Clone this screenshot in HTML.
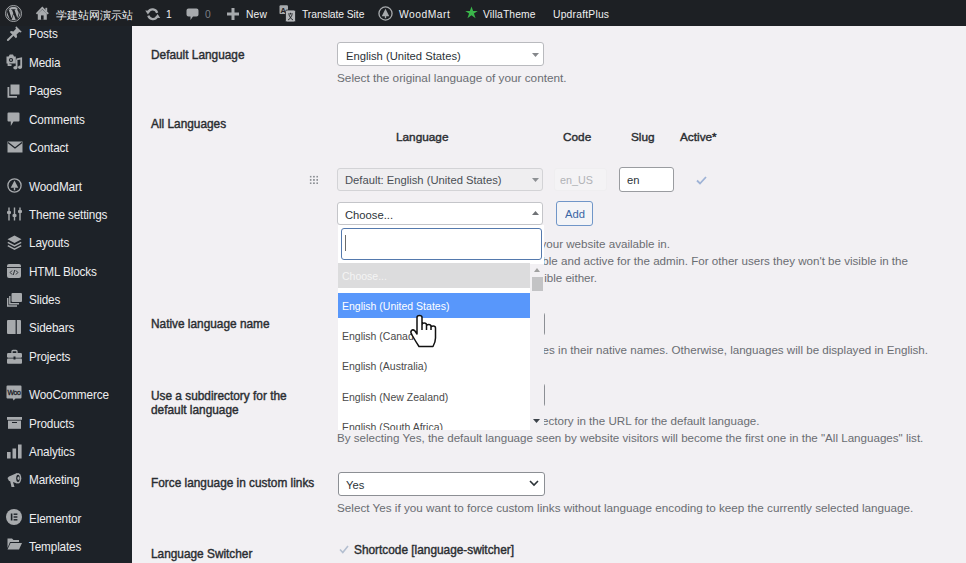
<!DOCTYPE html>
<html><head><meta charset="utf-8">
<style>
*{box-sizing:border-box;margin:0;padding:0}
html,body{width:966px;height:563px;overflow:hidden;background:#f2f0f3;font-family:"Liberation Sans",sans-serif;position:relative}
.a{position:absolute;white-space:nowrap}
svg{position:absolute;overflow:visible}
#bar{position:absolute;left:0;top:0;width:966px;height:26px;background:#1d2024}
#side{position:absolute;left:0;top:26px;width:132px;height:537px;background:#1d2228}
.bt{position:absolute;top:7.8px;font-size:10.3px;line-height:14px;color:#f0f0f1;white-space:nowrap}
.si{position:absolute;left:29px;font-size:12.7px;letter-spacing:-0.15px;line-height:14px;color:#eeeef0;white-space:nowrap;transform:translateY(0.5px) scaleX(0.925);transform-origin:0 0}
.lbl{position:absolute;left:151px;font-size:11.85px;-webkit-text-stroke:0.4px #2a2d31;line-height:14px;color:#2a2d31;white-space:nowrap}
.desc{position:absolute;left:337px;font-size:11.6px;line-height:14px;color:#6a6d72;white-space:nowrap}
.sel{position:absolute;background:#fff;border:1px solid #8c8f94;border-radius:3px}
.st{position:absolute;font-size:11.7px;line-height:14px;color:#2c3338;white-space:nowrap;transform:scaleX(0.96);transform-origin:0 0}
.th{position:absolute;top:130px;font-size:11.8px;-webkit-text-stroke:0.4px #2a2d31;line-height:14px;color:#2a2d31;white-space:nowrap}
.op{position:absolute;left:342px;font-size:10.5px;line-height:14px;color:#4a4a4a;white-space:nowrap}
</style></head><body>
<div id="bar"></div>
<div id="side"></div>

<!-- top bar -->
<svg style="left:4.7px;top:4.9px" width="17" height="17" viewBox="0 0 24 24"><defs><clipPath id="wpc"><circle cx="12" cy="12" r="9.6"/></clipPath></defs><circle cx="12" cy="12" r="11.3" fill="none" stroke="#a7aaad" stroke-width="1.4"/><circle cx="12" cy="12" r="9.6" fill="#a7aaad"/><path clip-path="url(#wpc)" fill="#1d2024" d="M21.469 6.825c.84 1.537 1.318 3.3 1.318 5.175 0 3.979-2.156 7.456-5.363 9.325l3.295-9.527c.615-1.54.82-2.771.82-3.864 0-.405-.026-.78-.07-1.11m-7.981.105c.647-.03 1.232-.105 1.232-.105.582-.075.514-.93-.067-.899 0 0-1.755.135-2.88.135-1.064 0-2.85-.15-2.85-.15-.585-.03-.661.855-.075.885 0 0 .54.061 1.125.09l1.68 4.605-2.37 7.08L5.354 6.9c.649-.03 1.234-.1 1.234-.1.585-.075.516-.93-.065-.896 0 0-1.746.138-2.874.138-.2 0-.438-.008-.69-.015C4.911 3.15 8.235 1.215 12 1.215c2.809 0 5.365 1.072 7.286 2.833-.046-.003-.091-.009-.141-.009-1.06 0-1.812.923-1.812 1.914 0 .89.513 1.643 1.06 2.531.411.72.89 1.643.89 2.977 0 .915-.354 1.994-.821 3.479l-1.075 3.585-3.9-11.61.001.014zM12 22.784c-1.059 0-2.081-.153-3.048-.437l3.237-9.406 3.315 9.087c.024.053.05.101.078.149-1.12.393-2.325.609-3.582.609M1.211 12c0-1.564.336-3.05.935-4.39L7.29 21.709C3.694 19.96 1.212 16.271 1.211 12M12 0C5.385 0 0 5.385 0 12s5.385 12 12 12 12-5.385 12-12S18.615 0 12 0"/></svg>
<svg style="left:36px;top:7px" width="13" height="13" viewBox="0 0 13 13"><path d="M0.5 6.8 L6.3 0.8 L12.2 6.8" fill="none" stroke="#a7aaad" stroke-width="1.8" stroke-linejoin="miter"/><rect x="9.4" y="0.8" width="1.8" height="3.6" fill="#a7aaad"/><path d="M1.8 6.5 L6.3 2.4 L10.8 6.5 V12.8 H1.8 Z" fill="#a7aaad"/><rect x="5" y="8.4" width="2.6" height="4.4" fill="#1d2024"/></svg>
<div class="bt" style="left:56px;font-size:11px">学建站网演示站</div>
<svg style="left:144.5px;top:7.5px" width="15.5" height="12.5" viewBox="0 0 16 13"><path d="M12.6 5 A5 5 0 0 0 3.4 4.2 M3.4 8 A5 5 0 0 0 12.6 8.8" fill="none" stroke="#a7aaad" stroke-width="2.4"/><path d="M0.2 2.6 L5.6 2.8 L3 6.8 Z M15.8 10.4 L10.4 10.2 L13 6.2 Z" fill="#a7aaad"/></svg>
<div class="bt" style="left:166px">1</div>
<svg style="left:185.5px;top:8px" width="13" height="12.5" viewBox="0 0 13 12.5"><path d="M2.5 0.5 H10.5 Q12.5 0.5 12.5 2.5 V6.5 Q12.5 8.5 10.5 8.5 H7 L4.5 12 V8.5 H2.5 Q0.5 8.5 0.5 6.5 V2.5 Q0.5 0.5 2.5 0.5 Z" fill="#a7aaad"/></svg>
<div class="bt" style="left:205px;color:#7c7f84">0</div>
<svg style="left:227px;top:8px" width="12" height="12" viewBox="0 0 12 12"><path d="M4.5 0H7.5V4.5H12V7.5H7.5V12H4.5V7.5H0V4.5H4.5Z" fill="#a7aaad"/></svg>
<div class="bt" style="left:246px;letter-spacing:0.15px">New</div>
<svg style="left:279px;top:5px" width="17" height="17" viewBox="0 0 17 17"><rect x="0.5" y="0.3" width="8.5" height="8.8" rx="1.2" fill="#a7aaad"/><text x="1.6" y="7.6" font-size="7.5" font-family="Liberation Sans" font-weight="bold" fill="#1d2024">A</text><rect x="6.5" y="5" width="10" height="12" rx="1.5" fill="#b4b6b9" stroke="#1d2024" stroke-width="0.8"/><path d="M9 9 H14 M11.5 7.8 V9 M10 10 Q11.5 14 14 15 M13 10 Q11.5 14 9 15" fill="none" stroke="#1d2024" stroke-width="0.9"/></svg>
<div class="bt" style="left:302px;letter-spacing:-0.06px">Translate Site</div>
<svg style="left:378px;top:6px" width="15" height="15" viewBox="0 0 16 16"><circle cx="8" cy="8" r="7" fill="none" stroke="#a7aaad" stroke-width="1.4"/><path d="M8 3 L12 11 H4 Z" fill="#a7aaad"/><rect x="7.3" y="10" width="1.4" height="3" fill="#a7aaad"/></svg>
<div class="bt" style="left:399px;letter-spacing:0.5px">WoodMart</div>
<svg style="left:465px;top:6px" width="13" height="13" viewBox="0 0 24 24"><path d="M12 1 L15 9 L23.5 9 L16.5 14 L19.5 22.5 L12 17 L4.5 22.5 L7.5 14 L0.5 9 L9 9 Z" fill="#3ab54a"/></svg>
<div class="bt" style="left:483px;letter-spacing:0.13px">VillaTheme</div>
<div class="bt" style="left:553px;letter-spacing:0.22px">UpdraftPlus</div>

<!-- sidebar texts -->
<div class="si" style="top:26.2px">Posts</div>
<div class="si" style="top:54.7px">Media</div>
<div class="si" style="top:83.2px">Pages</div>
<div class="si" style="top:112px">Comments</div>
<div class="si" style="top:140.3px">Contact</div>
<div class="si" style="top:178.7px">WoodMart</div>
<div class="si" style="top:207px">Theme settings</div>
<div class="si" style="top:235.3px">Layouts</div>
<div class="si" style="top:263.6px">HTML Blocks</div>
<div class="si" style="top:292px">Slides</div>
<div class="si" style="top:320.2px">Sidebars</div>
<div class="si" style="top:348.8px">Projects</div>
<div class="si" style="top:387.3px">WooCommerce</div>
<div class="si" style="top:415.6px">Products</div>
<div class="si" style="top:444px">Analytics</div>
<div class="si" style="top:472.2px">Marketing</div>
<div class="si" style="top:510.6px">Elementor</div>
<div class="si" style="top:538.8px">Templates</div>


<svg style="left:6.5px;top:25.5px" width="15" height="15" viewBox="0 0 15 15"><path d="M9.2 0.3 L14.7 5.8 L13.6 6.6 L12.2 6 L9.6 8.6 L10.1 11 L8.9 12.2 L2.8 6.1 L4 4.9 L6.4 5.4 L9 2.8 L8.4 1.4 Z" fill="#a7aaad"/><path d="M5.6 9.4 L0.9 14" stroke="#a7aaad" stroke-width="2" stroke-linecap="round"/></svg>
<svg style="left:6px;top:54px" width="16" height="16" viewBox="0 0 16 16"><path d="M0.5 2.6 H2.6 L3.8 0.6 H7 L8 2.6 H9.8 V9.4 H0.5 Z" fill="#a7aaad"/><circle cx="5" cy="6" r="2.1" fill="#1d2228"/><circle cx="5" cy="6" r="0.9" fill="#a7aaad"/><path d="M2.5 9 V11.2 H5.5" fill="none" stroke="#a7aaad" stroke-width="1.8"/><path d="M10.6 5.4 L15.2 4.4 V13.2 M10.6 5.4 V13.6" fill="none" stroke="#a7aaad" stroke-width="1.8"/><ellipse cx="9.4" cy="13.8" rx="2.1" ry="1.8" fill="#a7aaad"/><ellipse cx="14" cy="13.3" rx="2" ry="1.7" fill="#a7aaad"/></svg>
<svg style="left:7px;top:84px" width="13" height="14" viewBox="0 0 13 14"><path d="M3.5 0.5 H12.5 V10.5 H3.5 Z" fill="#a7aaad"/><path d="M0.5 3 H2.3 V12 H10 V13.8 H0.5 Z" fill="#a7aaad"/></svg>
<svg style="left:7px;top:111.5px" width="13" height="15" viewBox="0 0 13 15"><path d="M0.5 1.5 Q0.5 0.5 1.5 0.5 H11.5 Q12.5 0.5 12.5 1.5 V8.5 Q12.5 9.5 11.5 9.5 H6.5 L3.8 14 V9.5 H1.5 Q0.5 9.5 0.5 8.5 Z" fill="#a7aaad"/></svg>
<svg style="left:6.5px;top:141px" width="16" height="12" viewBox="0 0 16 12"><path d="M0.5 0.5 H15.5 V11.5 H0.5 Z" fill="#a7aaad"/><path d="M1 1.5 L8 7 L15 1.5" fill="none" stroke="#1d2228" stroke-width="1.3"/></svg>
<svg style="left:6.5px;top:177.5px" width="15" height="15" viewBox="0 0 15 15"><circle cx="7.5" cy="7.5" r="6.6" fill="none" stroke="#a7aaad" stroke-width="1.3"/><path d="M7.5 2.6 L11.3 9.8 H3.7 Z" fill="#a7aaad"/><rect x="6.8" y="9.5" width="1.4" height="2.8" fill="#a7aaad"/></svg>
<svg style="left:6.5px;top:206.5px" width="15" height="14" viewBox="0 0 15 14"><path d="M2 0.5 V13.5 M7.5 0.5 V13.5 M13 0.5 V13.5" stroke="#a7aaad" stroke-width="1.4"/><rect x="0" y="4" width="4" height="3" rx="1" fill="#a7aaad"/><rect x="5.5" y="7" width="4" height="3" rx="1" fill="#a7aaad"/><rect x="11" y="3" width="4" height="3" rx="1" fill="#a7aaad"/></svg>
<svg style="left:6.5px;top:234.5px" width="15" height="15" viewBox="0 0 15 15"><path d="M7.5 0.5 L14.5 4.2 L7.5 8 L0.5 4.2 Z" fill="#a7aaad"/><path d="M0.8 7.4 L7.5 11 L14.2 7.4 M0.8 10.6 L7.5 14.2 L14.2 10.6" fill="none" stroke="#a7aaad" stroke-width="1.5"/></svg>
<svg style="left:7px;top:263.5px" width="14" height="14" viewBox="0 0 14 14"><rect x="0" y="0" width="14" height="14" rx="2" fill="#a7aaad"/><rect x="0" y="3" width="14" height="0.9" fill="#1d2228"/><path d="M5 6.5 L3.2 8.5 L5 10.5 M9 6.5 L10.8 8.5 L9 10.5 M7.8 6 L6.2 11" fill="none" stroke="#1d2228" stroke-width="0.9"/></svg>
<svg style="left:6.5px;top:293px" width="15" height="14" viewBox="0 0 15 14"><rect x="4.5" y="0" width="10.5" height="9" rx="1" fill="#a7aaad"/><path d="M2.8 3 V10.8 H12" fill="none" stroke="#a7aaad" stroke-width="1.4"/><path d="M0.7 5 V13 H10" fill="none" stroke="#a7aaad" stroke-width="1.4"/></svg>
<svg style="left:7px;top:320px" width="14" height="14" viewBox="0 0 14 14"><rect x="0" y="0" width="14" height="14" rx="1" fill="#a7aaad"/><rect x="8.6" y="0" width="1.2" height="14" fill="#1d2228"/></svg>
<svg style="left:6.5px;top:349.5px" width="15" height="14" viewBox="0 0 15 14"><path d="M5 3 V1.5 Q5 0.5 6 0.5 H9 Q10 0.5 10 1.5 V3" fill="none" stroke="#a7aaad" stroke-width="1.3"/><rect x="0" y="3" width="15" height="4.8" rx="1.2" fill="#a7aaad"/><rect x="0" y="8.6" width="15" height="5.2" rx="1" fill="#a7aaad"/><rect x="6.5" y="6.5" width="2" height="3" fill="#1d2228"/></svg>
<svg style="left:6px;top:385px" width="16" height="16" viewBox="0 0 16 16"><path d="M1.5 0.5 H14.5 Q15.5 0.5 15.5 1.5 V12.5 Q15.5 13.5 14.5 13.5 H9.5 L7.5 15.5 L6.8 13.5 H1.5 Q0.5 13.5 0.5 12.5 V1.5 Q0.5 0.5 1.5 0.5Z" fill="#a7aaad"/><text x="1.6" y="9.6" font-size="7" font-family="Liberation Sans" fill="#1d2228" letter-spacing="-0.5" stroke="#1d2228" stroke-width="0.3">Woo</text></svg>
<svg style="left:6.5px;top:417px" width="15" height="12" viewBox="0 0 15 12"><rect x="0" y="0" width="15" height="2.8" fill="#a7aaad"/><rect x="1" y="3.6" width="13" height="8.2" fill="#a7aaad"/><rect x="5" y="5" width="5" height="1" fill="#1d2228"/></svg>
<svg style="left:6.5px;top:443.5px" width="15" height="15" viewBox="0 0 15 15"><rect x="0" y="8" width="3.6" height="6.5" fill="#a7aaad"/><rect x="5.5" y="4.5" width="3.6" height="10" fill="#a7aaad"/><rect x="11" y="0.5" width="3.6" height="14" fill="#a7aaad"/></svg>
<svg style="left:6.5px;top:471.5px" width="15" height="16" viewBox="0 0 15 16"><path d="M0.5 6 L2 4.5 L10 1 V11.5 L6 10 L7.5 15 H4.5 L3.2 9.3 L2 9 Z" fill="#a7aaad"/><ellipse cx="11" cy="6.3" rx="3.3" ry="5.3" fill="#a7aaad"/><ellipse cx="11" cy="6.3" rx="1.8" ry="3.6" fill="#1d2228"/><ellipse cx="11.4" cy="6.3" rx="1" ry="1.8" fill="#a7aaad"/></svg>
<svg style="left:6px;top:509px" width="16" height="16" viewBox="0 0 16 16"><circle cx="8" cy="8" r="8" fill="#a7aaad"/><rect x="4.8" y="4.5" width="1.6" height="7" fill="#1d2228"/><rect x="7.6" y="4.5" width="3.8" height="1.4" fill="#1d2228"/><rect x="7.6" y="7.3" width="3.8" height="1.4" fill="#1d2228"/><rect x="7.6" y="10.1" width="3.8" height="1.4" fill="#1d2228"/></svg>
<svg style="left:6.5px;top:538px" width="15" height="12" viewBox="0 0 15 12"><path d="M0.5 0.5 H5 L6.5 2 H12 V4 H3 L0.5 10 Z" fill="#a7aaad"/><path d="M3.5 5 H15 L12 11.5 H0.5 Z" fill="#a7aaad"/></svg>


<!-- content labels -->
<div class="lbl" style="top:47.6px">Default Language</div>
<div class="lbl" style="top:116.5px">All Languages</div>
<div class="lbl" style="top:316.9px">Native language name</div>
<div class="lbl" style="top:389.2px;line-height:14.2px">Use a subdirectory for the<br>default language</div>
<div class="lbl" style="top:476px">Force language in custom links</div>
<div class="lbl" style="top:546.6px">Language Switcher</div>

<!-- default language -->
<div class="sel" style="left:337px;top:42px;width:207px;height:24px;border-color:#b9babe"></div>
<div class="st" style="left:345.5px;top:48.8px">English (United States)</div>
<svg style="left:531.5px;top:52.5px" width="7" height="4" viewBox="0 0 7 4"><path d="M0 0H7L3.5 4Z" fill="#85878b"/></svg>
<div class="desc" style="top:71.3px;font-size:11.78px">Select the original language of your content.</div>

<!-- table header -->
<div class="th" style="left:396px">Language</div>
<div class="th" style="left:563px">Code</div>
<div class="th" style="left:631px">Slug</div>
<div class="th" style="left:680px">Active*</div>

<!-- row -->
<div class="a" style="left:309px;top:175px;width:10px;height:10px;background-image:radial-gradient(circle,#8c8f94 0.9px,transparent 1.3px);background-size:3.3px 3.3px"></div>
<div class="sel" style="left:337px;top:168px;width:206px;height:23px;background:#efeef0;border-color:#d3d3d6"></div>
<div class="st" style="left:345px;top:173px;color:#4a4f55">Default: English (United States)</div>
<svg style="left:532px;top:178px" width="7" height="4" viewBox="0 0 7 4"><path d="M0 0H7L3.5 4Z" fill="#8d9094"/></svg>
<div class="sel" style="left:554px;top:168px;width:53px;height:23px;background:#f4f3f5;border-color:#efeef0"></div>
<div class="st" style="left:560px;top:173px;color:#b0b2b6;font-size:11.2px">en_US</div>
<div class="sel" style="left:619px;top:167px;width:55px;height:25px;border-color:#9a9ca0"></div>
<div class="st" style="left:627px;top:173px">en</div>
<svg style="left:696px;top:176px" width="11" height="9" viewBox="0 0 11 9"><path d="M1 4.5 L4 7.5 L10 1" fill="none" stroke="#9fb3d6" stroke-width="1.8"/></svg>

<!-- choose row -->
<div class="sel" style="left:337px;top:202px;width:206px;height:23px;border-color:#c4c5c9"></div>
<div class="st" style="left:345px;top:207.5px">Choose...</div>
<svg style="left:532px;top:211px" width="7" height="4" viewBox="0 0 7 4"><path d="M0 4H7L3.5 0Z" fill="#6f7276"/></svg>
<div class="sel" style="left:556px;top:201px;width:37px;height:25px;background:#f3f4f7;border-color:#7096c8"></div>
<div class="st" style="left:565px;top:207px;color:#3b67a5">Add</div>

<!-- desc -->




<!-- native -->
<div class="sel" style="left:338px;top:312px;width:207px;height:24px"></div>


<!-- subdir -->
<div class="sel" style="left:338px;top:383px;width:207px;height:24px"></div>

<div class="desc" style="top:431px">By selecting Yes, the default language seen by website visitors will become the first one in the "All Languages" list.</div>

<!-- force -->
<div class="sel" style="left:338px;top:472px;width:207px;height:24px"></div>
<div class="st" style="left:346px;top:477.6px">Yes</div>
<svg style="left:529px;top:480px" width="10" height="6" viewBox="0 0 10 6"><path d="M1 1 L5 5 L9 1" fill="none" stroke="#2c3338" stroke-width="1.6"/></svg>
<div class="desc" style="top:500.6px;font-size:11.69px">Select Yes if you want to force custom links without language encoding to keep the currently selected language.</div>

<!-- switcher -->
<svg style="left:339px;top:545px" width="10" height="9" viewBox="0 0 10 9"><path d="M1 4.5 L3.8 7.5 L9 1" fill="none" stroke="#b4bfd0" stroke-width="1.6"/></svg>
<div class="lbl" style="left:354px;top:542.6px">Shortcode [language-switcher]</div>

<div class="a" style="left:338px;top:225px;width:628px;height:210px;overflow:hidden"><div class="desc" style="left:auto;right:296px;top:11.6px">Select the languages you wish to make your website available in.</div><div class="desc" style="left:auto;right:58px;top:28.6px">The inactive languages will still be visible and active for the admin. For other users they won't be visible in the</div><div class="desc" style="left:auto;right:369px;top:46px">language switchers and won't be accessible either.</div><div class="desc" style="left:auto;right:38px;top:117.5px">Select Yes if you want to display languages in their native names. Otherwise, languages will be displayed in English.</div><div class="desc" style="left:auto;right:206.5px;top:188.8px">Select Yes if you want to add the subdirectory in the URL for the default language.</div></div>
<!-- dropdown -->
<div class="a" style="left:338px;top:225px;width:206px;height:39px;background:#fff"></div>
<div class="a" style="left:341px;top:228px;width:201px;height:32px;border:1.3px solid #5479ad;border-radius:3px;background:#fff"></div>
<div class="a" style="left:345px;top:235px;width:1px;height:16px;background:#6b6b6b"></div>
<div class="a" style="left:338px;top:264px;width:192px;height:166px;background:#fff"></div>
<div class="a" style="left:530px;top:264px;width:14px;height:166px;background:#f2f0f3"></div>
<svg style="left:534px;top:268px" width="6" height="4" viewBox="0 0 6 4"><path d="M0 4H6L3 0Z" fill="#a0a0a0"/></svg>
<div class="a" style="left:532px;top:277px;width:11px;height:14px;background:#c3c3c5"></div>
<div class="a" style="left:338px;top:263.3px;width:192px;height:24.7px;background:#dcdcdd"></div>
<div class="op" style="top:269px;color:#f4f4f4">Choose...</div>
<div class="a" style="left:338px;top:293px;width:192px;height:25px;background:#5897fb"></div>
<div class="op" style="top:299px;color:#fff">English (United States)</div>
<div class="op" style="top:329px">English (Canada)</div>
<div class="op" style="top:359px">English (Australia)</div>
<div class="op" style="top:390px">English (New Zealand)</div>
<div class="a" style="left:338px;top:410px;width:192px;height:20px;overflow:hidden"><div class="op" style="left:4px;top:10px">English (South Africa)</div></div>
<svg style="left:533px;top:419px" width="7" height="4" viewBox="0 0 7 4"><path d="M0 0H7L3.5 4Z" fill="#3c434a"/></svg>

<!-- cursor -->
<svg style="left:410px;top:315px" width="27" height="33" viewBox="0 0 27 33"><path d="M7 19 V2.5 Q7 0.5 9.5 0.5 Q12 0.5 12 2.5 V10 Q12 8 14.2 8 Q16.5 8 16.5 10 V11 Q16.5 9.5 18.7 9.5 Q21 9.5 21 11.5 V12.5 Q21 11 23.2 11 Q25.5 11 25.5 13 V23 Q25.5 27 23 31.5 H9 Q6 27 2 20 Q0 17 1.5 15.5 Q3 14 5 16 L7 19 Z M12 10 V15 M16.5 11 V15 M21 12.5 V15" fill="#fff" stroke="#111" stroke-width="1.5" stroke-linejoin="round"/></svg>

</body></html>
